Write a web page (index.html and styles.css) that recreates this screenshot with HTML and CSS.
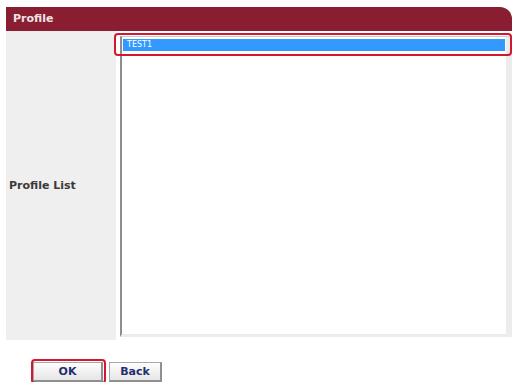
FILE: index.html
```html
<!DOCTYPE html>
<html>
<head>
<meta charset="utf-8">
<link rel="stylesheet" href="styles.css">
</head>
<body>
<div class="panel">
  <div class="header">Profile</div>
  <div class="row">
    <div class="label">Profile List</div>
    <div class="cell">
      <div class="listbox">
        <div class="item selected">TEST1<span class="mark"></span></div>
      </div>
    </div>
  </div>
</div>
<div class="buttons">
  <button class="btn ok">OK<span class="mark-btn"></span></button>
  <button class="btn back">Back</button>
</div>
</body>
</html>
```
FILE: styles.css
```css
html, body {
  margin: 0;
  padding: 0;
  background: #ffffff;
  font-family: "DejaVu Sans", Verdana, sans-serif;
}
.panel {
  margin: 7px 0 0 6px;
}
.header {
  height: 24px;
  line-height: 24px;
  background: #891d32;
  border-top-right-radius: 12px;
  color: #f3e2e5;
  font-weight: bold;
  font-size: 11px;
  padding-left: 7px;
}
.row {
  display: grid;
  grid-template-columns: 110px 1fr;
  height: 307px;
}
.label {
  background: #efefef;
  display: flex;
  align-items: center;
  padding-left: 3px;
  font-size: 11px;
  font-weight: bold;
  color: #3a3a3a;
}
.cell {
  padding: 5px 0 3px 4px;
  background: #fff;
}
.listbox {
  height: 295px;
  border-left: 2px solid #8e8e8e;
  border-top: 1px solid #c8c8c8;
  border-right: 6px solid #ececec;
  border-bottom: 3px solid #ececec;
  padding: 2px 1px 0 1px;
}
.item {
  position: relative;
  height: 12px;
  line-height: 12px;
  font-size: 8px;
  color: #fff;
  padding-left: 4px;
}
.selected {
  background: #3399ff;
}
.mark {
  position: absolute;
  left: -9px;
  right: -7px;
  top: -6px;
  bottom: -5px;
  border: 2px solid #d2172f;
  border-radius: 4px;
}
.buttons {
  display: flex;
  gap: 6px;
  padding: 24px 0 0 33px;
}
.btn {
  position: relative;
  height: 20px;
  margin: 0;
  padding: 0;
  border: 1px solid #a8a8a8;
  border-right: 2px solid #8f8f8f;
  border-bottom: 2px solid #8f8f8f;
  background: linear-gradient(#fdfdfd, #e6e6e6);
  color: #1f2f6e;
  font-family: "DejaVu Sans", Verdana, sans-serif;
  font-weight: bold;
  font-size: 11px;
}
.ok { width: 70px; }
.back { width: 53px; }
.mark-btn {
  position: absolute;
  left: -3px;
  right: -5px;
  top: -4px;
  bottom: -4px;
  border: 2px solid #d2172f;
  border-radius: 4px;
}
```
